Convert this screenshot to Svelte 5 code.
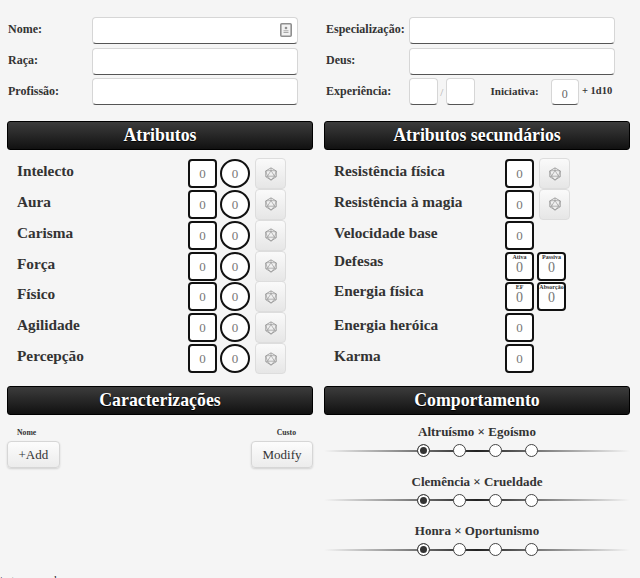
<script>
  const attributes = ["Intelecto", "Aura", "Carisma", "Força", "Físico", "Agilidade", "Percepção"];
  const behaviours = ["Altruísmo × Egoísmo", "Clemência × Crueldade", "Honra × Oportunismo"];
</script>

{#snippet die()}
  <button class="roll" aria-label="Rolar">
    <svg viewBox="0 0 16 16" width="14" height="14" fill="none" stroke="#9a9a9a" stroke-width="1">
      <path d="M8 1 14 4.500V11L8 15 2 11V4.500Z" />
      <path d="M8 4 12 10.500H4ZM8 1V4M2 4.500 8 4 14 4.500M4 10.500 8 15 12 10.500M2 11H4M14 11H12M2 4.500 4 10.500M14 4.500 12 10.500" stroke-width="0.8" />
    </svg>
  </button>
{/snippet}

{#snippet slider(title)}
  <div class="behaviour">
    <div class="behaviour-title">{title}</div>
    <div class="track">
      <span class="dot on"></span>
      <span class="dot"></span>
      <span class="dot"></span>
      <span class="dot"></span>
    </div>
  </div>
{/snippet}

<main class="sheet">
  <section class="fields">
    <div class="field">
      <span class="label">Nome:</span>
      <div class="text-input">
        <svg class="contact" viewBox="0 0 12 14" width="12" height="14">
          <rect x="0.800" y="0.800" width="10.400" height="12.400" rx="1" fill="#f2f2f2" stroke="#8f8f8f" stroke-width="1.600" />
          <circle cx="6" cy="5" r="1.300" fill="#8f8f8f" />
          <path d="M3.500 9.500h5M3.500 7.800h5" stroke="#a8a8a8" />
        </svg>
      </div>
    </div>
    <div class="field">
      <span class="label">Raça:</span>
      <div class="text-input"></div>
    </div>
    <div class="field">
      <span class="label">Profissão:</span>
      <div class="text-input"></div>
    </div>
  </section>

  <section class="fields right">
    <div class="field">
      <span class="label">Especialização:</span>
      <div class="text-input"></div>
    </div>
    <div class="field">
      <span class="label">Deus:</span>
      <div class="text-input"></div>
    </div>
    <div class="field">
      <span class="label">Experiência:</span>
      <div class="text-input small"></div>
      <span class="slash">/</span>
      <div class="text-input small"></div>
      <span class="label initiative">Iniciativa:</span>
      <div class="text-input small zero">0</div>
      <span class="label bonus">+ 1d10</span>
    </div>
  </section>

  <h2 class="bar first">Atributos</h2>
  <h2 class="bar first">Atributos secundários</h2>

  <section class="stats">
    {#each attributes as name}
      <div class="stat">
        <span class="stat-name">{name}</span>
        <span class="box">0</span>
        <span class="box round">0</span>
        {@render die()}
      </div>
    {/each}
  </section>

  <section class="stats secondary">
    <div class="stat">
      <span class="stat-name">Resistência física</span>
      <span class="box">0</span>
      {@render die()}
    </div>
    <div class="stat">
      <span class="stat-name">Resistência à magia</span>
      <span class="box">0</span>
      {@render die()}
    </div>
    <div class="stat">
      <span class="stat-name">Velocidade base</span>
      <span class="box">0</span>
    </div>
    <div class="stat">
      <span class="stat-name raised">Defesas</span>
      <span class="box captioned"><small>Ativa</small>0</span>
      <span class="box captioned"><small>Passiva</small>0</span>
    </div>
    <div class="stat">
      <span class="stat-name raised">Energia física</span>
      <span class="box captioned"><small>EF</small>0</span>
      <span class="box captioned"><small>Absorção</small>0</span>
    </div>
    <div class="stat">
      <span class="stat-name">Energia heróica</span>
      <span class="box">0</span>
    </div>
    <div class="stat">
      <span class="stat-name">Karma</span>
      <span class="box">0</span>
    </div>
  </section>

  <h2 class="bar">Caracterizações</h2>
  <h2 class="bar">Comportamento</h2>

  <section class="traits">
    <div class="traits-head">
      <span>Nome</span>
      <span>Custo</span>
    </div>
    <div class="traits-actions">
      <button class="action">+Add</button>
      <button class="action">Modify</button>
    </div>
  </section>

  <section class="behaviours">
    {#each behaviours as title}
      {@render slider(title)}
    {/each}
  </section>
</main>

<footer class="foot">tagmar.com.br</footer>

<style>
  :global(html) {
    overflow: hidden;
  }
  :global(body) {
    background: #f5f5f5;
    color: #333;
    font-family: "Liberation Serif", "Times New Roman", serif;
  }
  .sheet {
    display: grid;
    grid-template-columns: 306px 306px;
    column-gap: 11px;
    padding: 17px 0 0 7px;
  }
  .fields {
    display: flex;
    flex-direction: column;
    gap: 3px;
    padding-left: 1px;
  }
  .fields.right {
    padding-left: 2px;
  }
  .field {
    display: flex;
    align-items: flex-start;
    height: 28px;
  }
  .field:last-child {
    margin-top: -1px;
  }
  .label {
    font-size: 12px;
    font-weight: bold;
    line-height: 24px;
    width: 83.500px;
    flex: none;
  }
  .field:last-child .label {
    line-height: 26px;
  }
  .right .label {
    width: 83px;
    white-space: nowrap;
  }
  .text-input {
    position: relative;
    width: 206px;
    height: 27px;
    box-sizing: border-box;
    background: #fff;
    border: 1px solid #d6d6d6;
    border-bottom: 1px solid #555;
    border-radius: 4px;
  }
  .contact {
    position: absolute;
    top: 5px;
    right: 5px;
  }
  .text-input.small {
    width: 28.500px;
    flex: none;
  }
  .slash {
    width: 8.500px;
    flex: none;
    text-align: center;
    font-size: 11px;
    line-height: 28px;
    color: #aaa;
  }
  .right .initiative {
    width: 60px;
    margin-left: 16px;
    font-size: 11px;
  }
  .text-input.zero {
    margin-top: 1px;
    height: 26px;
    text-align: center;
    font-size: 12px;
    line-height: 28px;
    color: #666;
  }
  .right .bonus {
    width: auto;
    margin-left: 3px;
    font-size: 10.500px;
  }
  .bar {
    margin: 0;
    height: 29px;
    box-sizing: border-box;
    background: linear-gradient(#3c3c3c, #111);
    border: 1px solid #000;
    border-radius: 3px;
    color: #fff;
    font-size: 17.800px;
    font-weight: bold;
    line-height: 27px;
    text-align: center;
    text-shadow: 0 1px 1px #000;
  }
  .bar.first {
    margin-top: 15px;
  }
  .stats {
    display: flex;
    flex-direction: column;
    gap: 1.850px;
    padding: 8px 0 14px 10px;
  }
  .stat {
    display: flex;
    align-items: flex-start;
    gap: 3px;
    height: 29px;
  }
  .stat-name {
    width: 168px;
    font-size: 15.300px;
    font-weight: bold;
    line-height: 25px;
    flex: none;
  }
  .stat-name.raised {
    line-height: 19px;
  }
  .box {
    width: 29px;
    height: 29px;
    box-sizing: border-box;
    flex: none;
    margin-top: 1px;
    border: 2px solid #111;
    border-radius: 4px;
    background: #fff;
    color: #777;
    font-size: 13px;
    line-height: 25px;
    text-align: center;
  }
  .box.round {
    width: 30px;
    border-radius: 50%;
  }
  .box.captioned {
    display: flex;
    flex-direction: column;
    font-size: 14px;
    line-height: 13px;
  }
  .box small {
    color: #333;
    font-size: 6px;
    font-weight: bold;
    line-height: 7px;
    white-space: nowrap;
  }
  .roll {
    display: flex;
    align-items: center;
    justify-content: center;
    width: 31px;
    height: 31px;
    margin-left: 2px;
    padding: 0;
    background: linear-gradient(#fafafa, #e6e6e6);
    border: 1px solid #ddd;
    border-radius: 4px;
  }
  .traits {
    padding: 13px 0 0;
  }
  .traits-head {
    display: flex;
    justify-content: space-between;
    padding: 0 17px 0 10px;
    font-size: 7.700px;
    font-weight: bold;
    line-height: 9px;
  }
  .traits-actions {
    display: flex;
    justify-content: space-between;
    margin-top: 4px;
  }
  .action {
    height: 27px;
    padding: 0 10.500px;
    font: 13px "Liberation Serif", serif;
    color: #333;
    background: linear-gradient(#fcfcfc, #ececec);
    border: 1px solid #d6d6d6;
    border-radius: 4px;
    box-shadow: 0 1px 2px rgba(0, 0, 0, 0.15);
  }
  .behaviours {
    padding-top: 9px;
  }
  .behaviour {
    height: 49.500px;
  }
  .behaviour-title {
    font-size: 13px;
    font-weight: bold;
    line-height: 15px;
    text-align: center;
  }
  .track {
    display: flex;
    justify-content: center;
    gap: 23px;
    margin-top: 5px;
    background: linear-gradient(90deg, transparent, #222 50%, transparent) center / 100% 2px no-repeat;
  }
  .dot {
    width: 13px;
    height: 13px;
    box-sizing: border-box;
    border: 1px solid #444;
    border-radius: 50%;
    background: #fff;
  }
  .dot.on {
    background: #333;
    box-shadow: inset 0 0 0 2px #fff;
  }
  .foot {
    font-size: 11px;
    line-height: 13px;
    color: #222;
  }
</style>
